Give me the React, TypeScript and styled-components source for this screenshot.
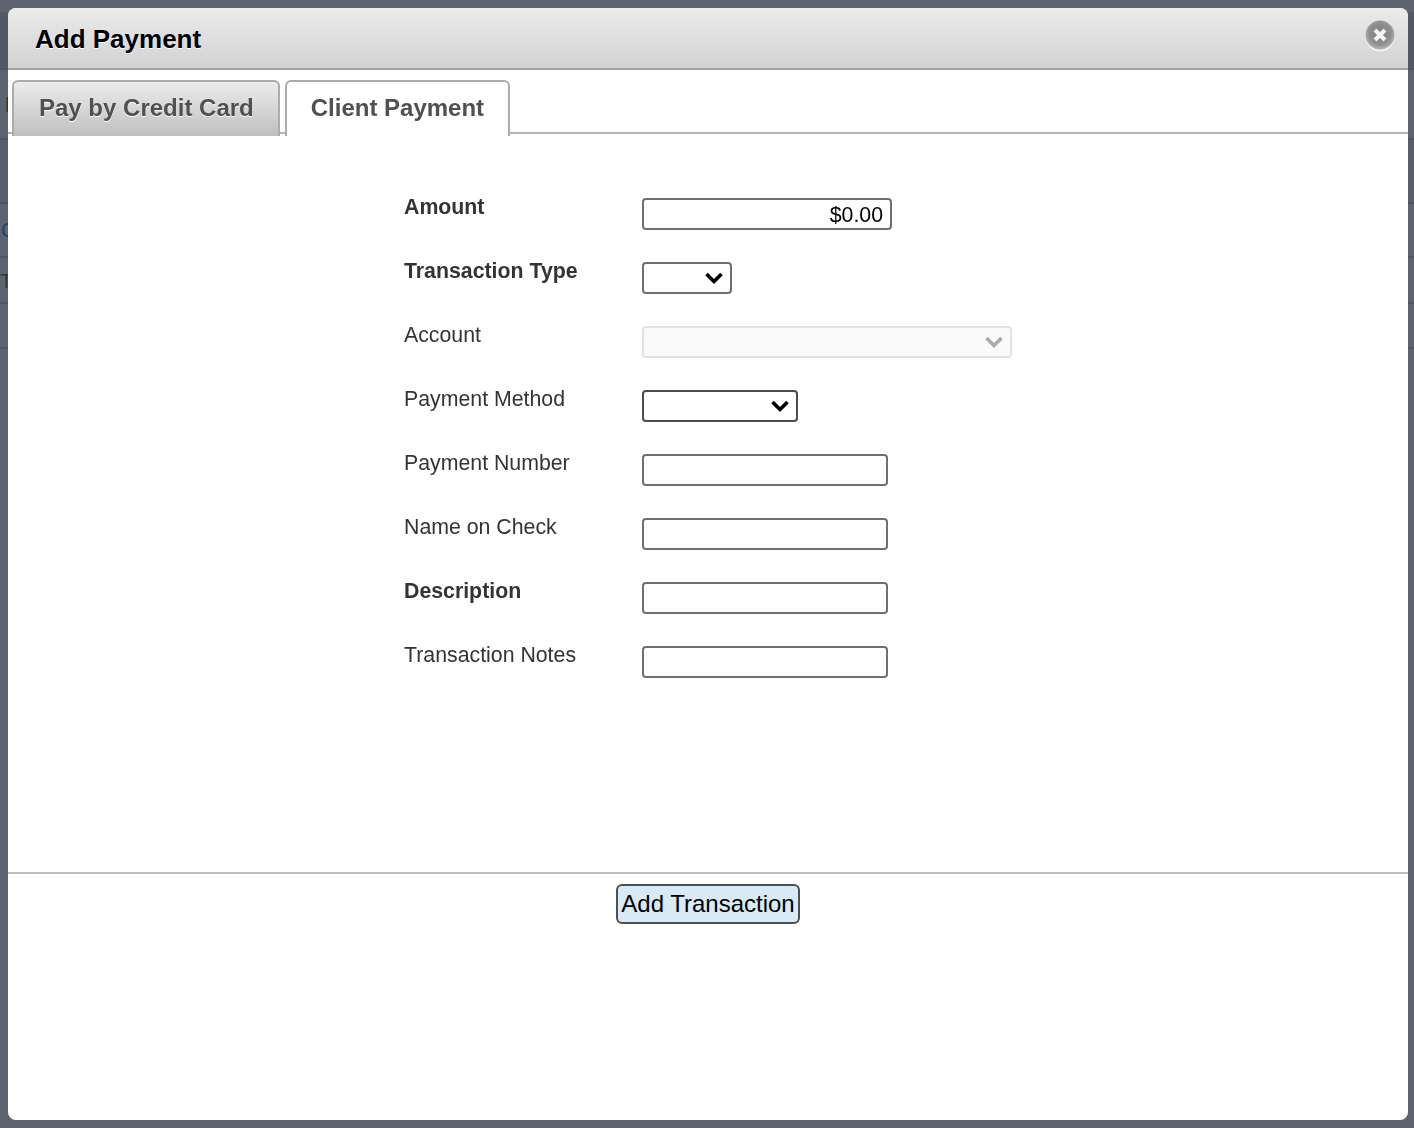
import React from "react";
import styled, { createGlobalStyle } from "styled-components";

const GlobalStyle = createGlobalStyle`
  html, body {
    margin: 0;
    padding: 0;
    height: 100%;
    overflow: hidden;
    background: #5d6470;
    font-family: "Liberation Sans", Arial, sans-serif;
  }
`;

const Backdrop = styled.div`
  height: 1128px;
  padding-top: 12px;
  box-sizing: border-box;
  overflow: hidden;
`;

const BackRow = styled.div<{ $h: number; $shade?: string; $shift?: number }>`
  height: ${(p) => p.$h}px;
  box-sizing: border-box;
  padding-left: ${(p) => p.$shift ?? 0}px;
  border-bottom: 2px solid #4e5460;
  background: ${(p) => p.$shade ?? "#5d6470"};
  font-size: 21px;
  line-height: ${(p) => p.$h}px;
  white-space: nowrap;
`;

const BackLink = styled.span`
  position: relative;
  top: -3px;
  color: #24466e;
  font-size: 25px;
`;

const BackText = styled.span`
  color: #33373f;
`;

const Modal = styled.div`
  position: fixed;
  left: 8px;
  top: 8px;
  width: 1400px;
  height: 1112px;
  background: #fff;
  border-radius: 8px;
  display: flex;
  flex-direction: column;
  overflow: hidden;
`;

const Header = styled.header`
  height: 60px;
  flex: none;
  display: flex;
  align-items: flex-start;
  justify-content: space-between;
  padding: 0 12px 0 27px;
  background: linear-gradient(#ebebeb, #d2d2d2);
  border-bottom: 2px solid #a3a3a3;
`;

const Title = styled.h1`
  margin: 15px 0 0;
  font-size: 26px;
  line-height: 32px;
  font-weight: bold;
  color: #000;
  text-shadow: 0 1px 0 #fff;
`;

const CloseButton = styled.button`
  width: 32px;
  height: 36px;
  padding: 0;
  margin-top: 10px;
  border: none;
  background: none;
  display: block;
`;

const TabBar = styled.div`
  height: 52px;
  margin-top: 10px;
  flex: none;
  display: flex;
  gap: 5px;
  padding-left: 4px;
  border-bottom: 2px solid #b4b4b4;
`;

const Tab = styled.div<{ $active?: boolean }>`
  height: 56px;
  box-sizing: border-box;
  padding: ${(p) => (p.$active ? "12px 24px 0" : "12px 24px 0 25px")};
  border: 2px solid #acacac;
  border-bottom: none;
  border-radius: 6px 6px 0 0;
  font-size: 24px;
  font-weight: bold;
  color: #505050;
  background: ${(p) => (p.$active ? "#fff" : "linear-gradient(#ececec, #bfbfbf)")};
  text-shadow: ${(p) => (p.$active ? "none" : "0 1px 0 #fff")};
  white-space: nowrap;
`;

const FormArea = styled.form`
  height: 740px;
  flex: none;
  box-sizing: border-box;
  padding: 63px 0 0 396px;
  display: flex;
  flex-direction: column;
  border-bottom: 2px solid #bdbdbd;
`;

const Row = styled.div`
  height: 64px;
  display: grid;
  grid-template-columns: 238px 1fr;
`;

const Label = styled.label<{ $bold?: boolean }>`
  margin-top: -2px;
  font-size: 21.3px;
  line-height: 24px;
  color: #333;
  font-weight: ${(p) => (p.$bold ? "bold" : "normal")};
`;

const TextField = styled.input<{ $w?: number }>`
  width: ${(p) => p.$w ?? 246}px;
  height: 32px;
  box-sizing: border-box;
  margin-top: 1px;
  padding: ${(p) => (p.$w ? "2px 7px 0" : "0 7px")};
  border: 2px solid #707070;
  border-radius: 4px;
  background: #fff;
  color: #000;
  font: 21.3px "Liberation Sans", Arial, sans-serif;
  text-align: ${(p) => (p.$w ? "right" : "left")};
  outline: none;
`;

const SelectBox = styled.div<{ $w: number }>`
  position: relative;
  width: ${(p) => p.$w}px;
  height: 32px;
  margin-top: 1px;
`;

const Select = styled.select<{ $dark?: boolean }>`
  appearance: none;
  display: block;
  width: 100%;
  height: 100%;
  box-sizing: border-box;
  border: 2px solid ${(p) => (p.$dark ? "#4c4c4c" : "#707070")};
  border-radius: 4px;
  background: #fff;
  outline: none;

  &:disabled {
    border-color: #e2e2e2;
    background: #fafafa;
    opacity: 1;
  }
`;

const Chevron = styled.svg`
  position: absolute;
  right: 8px;
  top: 9px;
  width: 20px;
  height: 14px;
  pointer-events: none;
`;

const Footer = styled.div`
  display: flex;
  justify-content: center;
  padding-top: 10px;
`;

const SubmitButton = styled.button`
  height: 40px;
  padding: 0 3px;
  border: 2px solid #4f4f4f;
  border-radius: 6px;
  background: #d9eaf7;
  color: #000;
  font: 24px "Liberation Sans", Arial, sans-serif;
  white-space: nowrap;
`;

const ChevronIcon = ({ color = "#000" }: { color?: string }) => (
  <Chevron viewBox="0 0 20 14">
    <path d="M2.5 3 L10 10.5 L17.5 3" fill="none" stroke={color} strokeWidth="3.6" />
  </Chevron>
);

const App: React.FC = () => {
  return (
    <>
      <GlobalStyle />
      <Backdrop>
        <BackRow $h={58} $shade="#525864" />
        <BackRow $h={70} $shift={5}>
          <BackText>l</BackText>
        </BackRow>
        <BackRow $h={64} $shade="#585f6b" />
        <BackRow $h={54} $shift={1}>
          <BackLink>c</BackLink>
        </BackRow>
        <BackRow $h={46}>
          <BackText>T</BackText>
        </BackRow>
        <BackRow $h={45} />
      </Backdrop>
      <Modal>
        <Header>
          <Title>Add Payment</Title>
          <CloseButton aria-label="Close">
            <svg width="32" height="36" viewBox="0 0 32 36">
              <defs>
                <radialGradient id="closeFill" cx="0.5" cy="0.45" r="0.55">
                  <stop offset="0" stopColor="#7c7c7c" />
                  <stop offset="0.7" stopColor="#909090" />
                  <stop offset="1" stopColor="#b6b6b6" />
                </radialGradient>
                <filter id="closeBlur" x="-20%" y="-20%" width="140%" height="140%">
                  <feGaussianBlur stdDeviation="0.7" />
                </filter>
              </defs>
              <circle cx="16" cy="19" r="14.5" fill="#f2f2f2" filter="url(#closeBlur)" />
              <circle cx="16" cy="17" r="14.5" fill="url(#closeFill)" filter="url(#closeBlur)" />
              <path
                d="M11 12 L21 22 M21 12 L11 22"
                stroke="#f4f4f4"
                strokeWidth="4"
                filter="url(#closeBlur)"
              />
            </svg>
          </CloseButton>
        </Header>
        <TabBar>
          <Tab>Pay by Credit Card</Tab>
          <Tab $active>Client Payment</Tab>
        </TabBar>
        <FormArea>
          <Row>
            <Label $bold>Amount</Label>
            <TextField $w={250} defaultValue="$0.00" />
          </Row>
          <Row>
            <Label $bold>Transaction Type</Label>
            <SelectBox $w={90}>
              <Select />
              <ChevronIcon />
            </SelectBox>
          </Row>
          <Row>
            <Label>Account</Label>
            <SelectBox $w={370}>
              <Select disabled />
              <ChevronIcon color="#ababab" />
            </SelectBox>
          </Row>
          <Row>
            <Label>Payment Method</Label>
            <SelectBox $w={156}>
              <Select $dark />
              <ChevronIcon />
            </SelectBox>
          </Row>
          <Row>
            <Label>Payment Number</Label>
            <TextField />
          </Row>
          <Row>
            <Label>Name on Check</Label>
            <TextField />
          </Row>
          <Row>
            <Label $bold>Description</Label>
            <TextField />
          </Row>
          <Row>
            <Label>Transaction Notes</Label>
            <TextField />
          </Row>
        </FormArea>
        <Footer>
          <SubmitButton type="button">Add Transaction</SubmitButton>
        </Footer>
      </Modal>
    </>
  );
};

export default App;
